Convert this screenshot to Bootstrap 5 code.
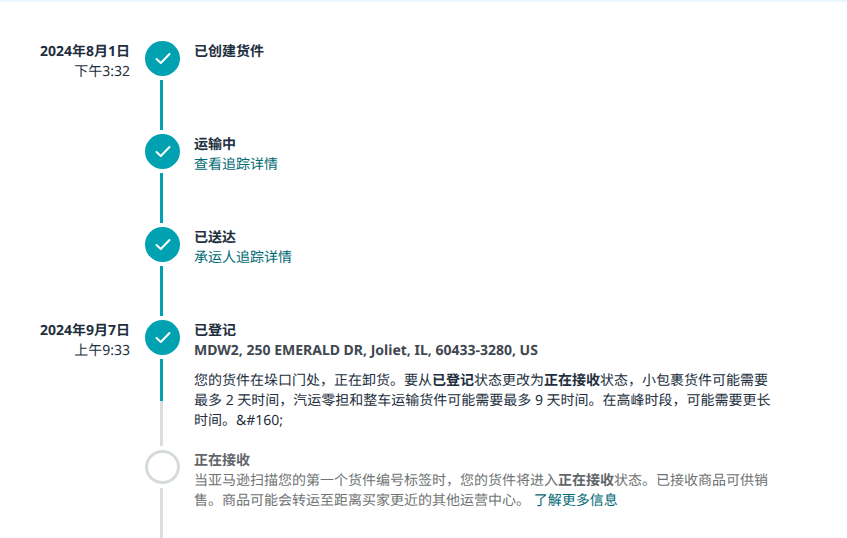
<!DOCTYPE html>
<html lang="zh-CN">
<head>
<meta charset="utf-8">
<title>货件追踪</title>
<link href="https://cdn.jsdelivr.net/npm/bootstrap@5.3.0/dist/css/bootstrap.min.css" rel="stylesheet">
<style>
html, body { height: 538px; overflow: hidden; }
body { font-family: "Noto Sans", "Noto Sans CJK SC", sans-serif; font-size: 14px; line-height: 20px; color: #232f3e; background: #fff; text-rendering: geometricPrecision; }
.top-strip { height: 2px; background: #eaf6fc; }
.timeline { padding-top: 39px; }
.step { min-height: 93px; }
.when { width: 130px; padding-top: 1px; }
.rail { width: 35px; margin: 0 14px 0 15px; }
.dot { width: 35px; height: 35px; flex: none; background: #00a1b0; }
.dot-open { background: #fff; border: 3px solid #d5dbdb; height: 34px; }
.seg-wrap { width: 3px; margin: 4px 0 4px 15px; flex: 1 1 auto; }
.seg-on { background: #00a1b0; }
.seg-off { background: #dcdddd; }
.seg-fixed { height: 42px; flex: none; }
.body-col { width: 578px; padding: 1px 0 19px; }
.addr { color: #414750; }
.note { margin: 10px 0 0; }
.muted-step { color: #6f7373; }
.muted-step b { color: #62666a; }
a.trk { color: #006a73; text-decoration: none; }
b { font-weight: 700; }
</style>
</head>
<body>
<div class="top-strip"></div>
<div class="timeline">
  <div class="step d-flex">
    <div class="when text-end flex-shrink-0"><div class="fw-bold">2024年8月1日</div><div>下午3:32</div></div>
    <div class="rail d-flex flex-column align-items-start flex-shrink-0">
      <div class="dot rounded-circle d-flex align-items-center justify-content-center"><svg width="16" height="13" viewBox="0 0 16 13"><path d="M1.5 7 L5.8 11 L14.5 2" fill="none" stroke="#fff" stroke-width="2" stroke-linecap="round" stroke-linejoin="round"/></svg></div>
      <div class="seg-wrap seg-on"></div>
    </div>
    <div class="body-col"><div class="fw-bold">已创建货件</div></div>
  </div>
  <div class="step d-flex">
    <div class="when flex-shrink-0"></div>
    <div class="rail d-flex flex-column align-items-start flex-shrink-0">
      <div class="dot rounded-circle d-flex align-items-center justify-content-center"><svg width="16" height="13" viewBox="0 0 16 13"><path d="M1.5 7 L5.8 11 L14.5 2" fill="none" stroke="#fff" stroke-width="2" stroke-linecap="round" stroke-linejoin="round"/></svg></div>
      <div class="seg-wrap seg-on"></div>
    </div>
    <div class="body-col"><div class="fw-bold">运输中</div><a class="trk" href="#">查看追踪详情</a></div>
  </div>
  <div class="step d-flex">
    <div class="when flex-shrink-0"></div>
    <div class="rail d-flex flex-column align-items-start flex-shrink-0">
      <div class="dot rounded-circle d-flex align-items-center justify-content-center"><svg width="16" height="13" viewBox="0 0 16 13"><path d="M1.5 7 L5.8 11 L14.5 2" fill="none" stroke="#fff" stroke-width="2" stroke-linecap="round" stroke-linejoin="round"/></svg></div>
      <div class="seg-wrap seg-on"></div>
    </div>
    <div class="body-col"><div class="fw-bold">已送达</div><a class="trk" href="#">承运人追踪详情</a></div>
  </div>
  <div class="step d-flex">
    <div class="when text-end flex-shrink-0"><div class="fw-bold">2024年9月7日</div><div>上午9:33</div></div>
    <div class="rail d-flex flex-column align-items-start flex-shrink-0">
      <div class="dot rounded-circle d-flex align-items-center justify-content-center"><svg width="16" height="13" viewBox="0 0 16 13"><path d="M1.5 7 L5.8 11 L14.5 2" fill="none" stroke="#fff" stroke-width="2" stroke-linecap="round" stroke-linejoin="round"/></svg></div>
      <div class="seg-wrap d-flex flex-column"><div class="seg-on seg-fixed"></div><div class="seg-off flex-grow-1"></div></div>
    </div>
    <div class="body-col">
      <div class="fw-bold">已登记</div>
      <div class="fw-bold addr">MDW2, 250 EMERALD DR, Joliet, IL, 60433-3280, US</div>
      <p class="note">您的货件在垛口门处，正在卸货。要从<b>已登记</b>状态更改为<b>正在接收</b>状态，小包裹货件可能需要最多 2 天时间，汽运零担和整车运输货件可能需要最多 9 天时间。在高峰时段，可能需要更长时间。&amp;#160;</p>
    </div>
  </div>
  <div class="step d-flex">
    <div class="when flex-shrink-0"></div>
    <div class="rail d-flex flex-column align-items-start flex-shrink-0">
      <div class="dot dot-open rounded-circle"></div>
      <div class="seg-wrap seg-off"></div>
    </div>
    <div class="body-col muted-step">
      <b class="d-block">正在接收</b>
      <div>当亚马逊扫描您的第一个货件编号标签时，您的货件将进入<b>正在接收</b>状态。已接收商品可供销售。商品可能会转运至距离买家更近的其他运营中心。 <a class="trk" href="#">了解更多信息</a></div>
    </div>
  </div>
</div>
<script src="https://cdn.jsdelivr.net/npm/bootstrap@5.3.0/dist/js/bootstrap.bundle.min.js"></script>
</body>
</html>
